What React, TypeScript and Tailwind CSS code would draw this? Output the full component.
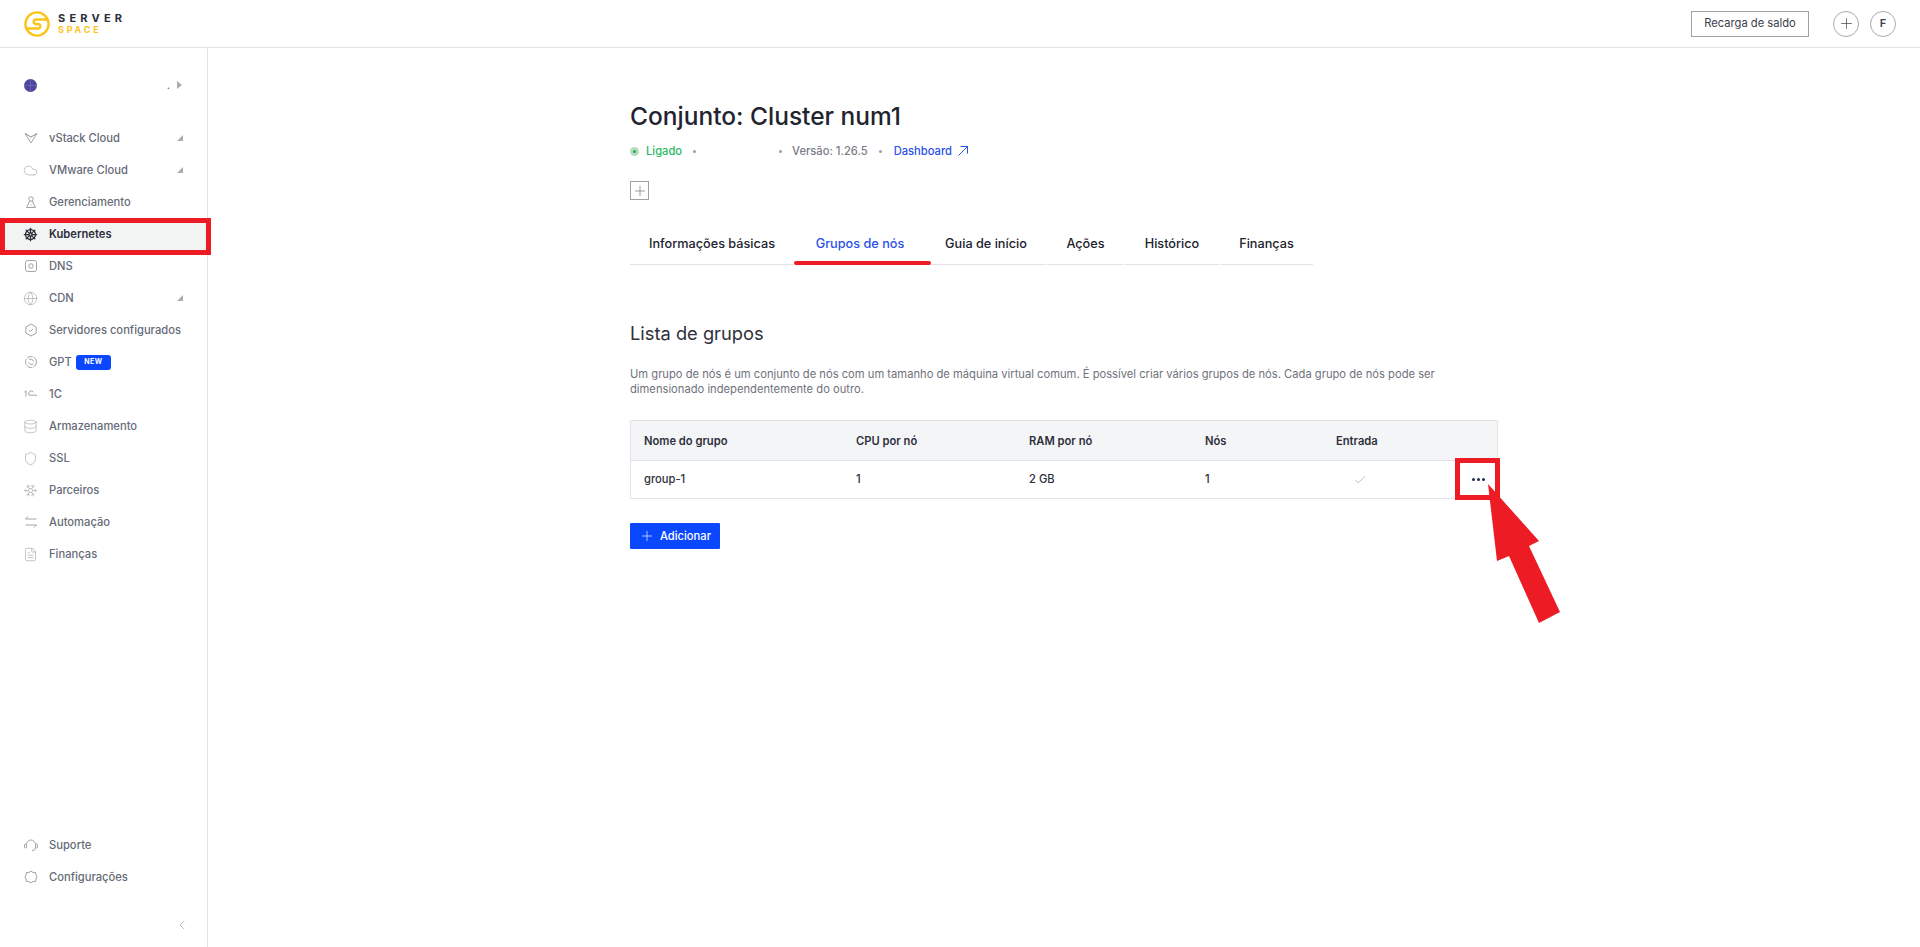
import React from "react";
import { Check, ChevronLeft, Cloud, Database, FileText, Globe, Plus, Shield, ShipWheel, Snowflake } from "lucide-react";

const iconClass = "h-[14px] w-[14px] text-[#a0a4ad]";
const lucideClass = "h-[15px] w-[15px] -ml-[1px] text-[#a0a4ad]";

function VStackIcon() {
  return (
    <svg viewBox="0 0 14 14" className={iconClass} fill="none" stroke="currentColor" strokeWidth="1">
      <path d="M1 2.500 7 12l6-9.500-6 3.500zM1 2.500 7 6M13 2.500 7 6" />
    </svg>
  );
}

function ManageIcon() {
  return (
    <svg viewBox="0 0 14 14" className={iconClass} fill="none" stroke="currentColor" strokeWidth="1">
      <circle cx="7" cy="4" r="2.200" />
      <path d="M5.800 6 2.500 12.500h9L8.200 6M7 9.500v1" />
    </svg>
  );
}

function DnsIcon() {
  return (
    <svg viewBox="0 0 14 14" className={iconClass} fill="none" stroke="currentColor" strokeWidth="1">
      <rect x="1.500" y="1.500" width="11" height="11" rx="2" />
      <circle cx="7" cy="7" r="2.200" />
    </svg>
  );
}

function ConfiguredIcon() {
  return (
    <svg viewBox="0 0 14 14" className={iconClass} fill="none" stroke="currentColor" strokeWidth="1">
      <path d="M7 1l5.200 3v6L7 13l-5.200-3V4z" />
      <path d="M4.800 7l1.600 1.500 2.800-2.800" />
    </svg>
  );
}

function GptIcon() {
  return (
    <svg viewBox="0 0 14 14" className={iconClass} fill="none" stroke="currentColor" strokeWidth="1">
      <circle cx="7" cy="7" r="5.500" strokeDasharray="6 1" />
      <path d="M5 4.500c2-1 4 0 4.500 2M9.500 9c-2 1-4 .5-5-1.500" />
    </svg>
  );
}

function OneCIcon() {
  return (
    <svg viewBox="0 0 14 14" className={iconClass} fill="none" stroke="currentColor" strokeWidth="1">
      <path d="M0.500 5l1.500-1.200V9.500" />
      <path d="M9.500 5a2.600 2.600 0 1 0-4.300 3.200H13" />
    </svg>
  );
}

function AutomationIcon() {
  return (
    <svg viewBox="0 0 14 14" className={iconClass} fill="none" stroke="currentColor" strokeWidth="1">
      <path d="M4 1.500 1.500 4h11M10 12.500 12.500 10h-11" />
    </svg>
  );
}

function SupportIcon() {
  return (
    <svg viewBox="0 0 14 14" className={iconClass} fill="none" stroke="currentColor" strokeWidth="1">
      <path d="M2.500 6.500a4.500 4.500 0 0 1 9 0v3.500a3 3 0 0 1-3.500 2.500" />
      <rect x="0.500" y="6" width="2" height="4" rx="1" />
      <rect x="11.500" y="6" width="2" height="4" rx="1" />
    </svg>
  );
}

function SettingsIcon() {
  return (
    <svg viewBox="0 0 14 14" className={iconClass} fill="none" stroke="currentColor" strokeWidth="1">
      <path d="M7 1l2 1.500h2.500L12 5l1 2-1 2-.5 2.500H9L7 13l-2-1.500H2.500L2 9 1 7l1-2 .5-2.500H5z" />
    </svg>
  );
}

function Caret() {
  return (
    <svg viewBox="0 0 6 6" className="h-[6px] w-[6px] text-[#a8abb2]" fill="currentColor">
      <polygon points="6,0 6,6 0,6" />
    </svg>
  );
}

function Logo() {
  return (
    <div className="flex items-center gap-[8px]">
      <svg viewBox="0 0 26 26" className="h-[26px] w-[26px]" fill="none" stroke="#fcc419" strokeWidth="2.400">
        <circle cx="13" cy="13" r="11.600" />
        <path d="M19 8.500h-7.500a2.300 2.300 0 0 0 0 4.500h3a2.300 2.300 0 0 1 0 4.500H2.500M12 8.500h12" />
      </svg>
      <div className="flex flex-col gap-[2px] font-bold leading-[10px]">
        <span className="text-[11px] tracking-[4.200px] text-[#2b2d3a]">SERVER</span>
        <span className="text-[9px] tracking-[2.800px] text-[#fcc419]">SPACE</span>
      </div>
    </div>
  );
}

type NavItem = {
  label: string;
  icon: React.ReactNode;
  caret?: boolean;
  active?: boolean;
  badge?: string;
};

const navItems: NavItem[] = [
  { label: "vStack Cloud", icon: <VStackIcon />, caret: true },
  { label: "VMware Cloud", icon: <Cloud className={lucideClass} strokeWidth={1} />, caret: true },
  { label: "Gerenciamento", icon: <ManageIcon /> },
  {
    label: "Kubernetes",
    icon: <ShipWheel className="h-[15px] w-[15px] -ml-[1px] text-[#2b2d3a]" strokeWidth={2} />,
    active: true,
  },
  { label: "DNS", icon: <DnsIcon /> },
  { label: "CDN", icon: <Globe className={lucideClass} strokeWidth={1} />, caret: true },
  { label: "Servidores configurados", icon: <ConfiguredIcon /> },
  { label: "GPT", icon: <GptIcon />, badge: "NEW" },
  { label: "1C", icon: <OneCIcon /> },
  { label: "Armazenamento", icon: <Database className={lucideClass} strokeWidth={1} /> },
  { label: "SSL", icon: <Shield className={lucideClass} strokeWidth={1} /> },
  { label: "Parceiros", icon: <Snowflake className={lucideClass} strokeWidth={1} /> },
  { label: "Automação", icon: <AutomationIcon /> },
  { label: "Finanças", icon: <FileText className={lucideClass} strokeWidth={1} /> },
];

const bottomItems: NavItem[] = [
  { label: "Suporte", icon: <SupportIcon /> },
  { label: "Configurações", icon: <SettingsIcon /> },
];

function NavRow({ item }: { item: NavItem }) {
  return (
    <div
      className={
        item.active
          ? "flex h-[32px] items-center bg-[#f2f3f3] pl-[24px] pr-[24px] font-semibold text-[#2b2d3a]"
          : "flex h-[32px] items-center pl-[24px] pr-[24px] font-medium text-[#666b78]"
      }
    >
      <span className="flex w-[25px] shrink-0">{item.icon}</span>
      <span className="whitespace-nowrap">{item.label}</span>
      {item.badge && (
        <span className="ml-[4px] flex h-[15px] w-[35px] items-center justify-center rounded-[3px] bg-[#0a47ff] text-[7px] font-bold tracking-[0.4px] text-white">
          {item.badge}
        </span>
      )}
      {item.caret && (
        <span className="ml-auto">
          <Caret />
        </span>
      )}
    </div>
  );
}

function Sidebar() {
  return (
    <aside className="flex w-[208px] shrink-0 flex-col border-r border-[#e2e2e4] text-[11.200px]">
      <div className="flex h-[44px] items-center pl-[24px] pr-[25px] pt-[30px]">
        <svg viewBox="0 0 13 13" className="h-[13px] w-[13px]">
          <circle cx="6.500" cy="6.500" r="6.500" fill="#4d469f" />
          <path d="M6.500 0v13M0 6.500h13" stroke="#7470b8" strokeWidth="0.600" />
        </svg>
        <span className="ml-auto text-[#666b78]">.</span>
        <svg viewBox="0 0 5 8" className="ml-[7px] h-[8px] w-[5px] text-[#a8abb2]" fill="currentColor">
          <polygon points="0,0 5,4 0,8" />
        </svg>
      </div>
      <nav className="mt-[30px] flex flex-col">
        {navItems.map((item) => (
          <NavRow key={item.label} item={item} />
        ))}
      </nav>
      <div className="mt-auto flex flex-col">
        {bottomItems.map((item) => (
          <NavRow key={item.label} item={item} />
        ))}
      </div>
      <div className="flex h-[54px] items-center justify-end pr-[17px] pt-[10px]">
        <ChevronLeft className="h-[16px] w-[16px] text-[#a0a4ad]" strokeWidth={1} />
      </div>
    </aside>
  );
}

function Dot() {
  return <span className="h-[3px] w-[3px] rounded-full bg-[#9a9da5]" />;
}

const tabs = [
  { label: "Informações básicas", width: "w-[164px]" },
  { label: "Grupos de nós", width: "w-[130px]", active: true },
  { label: "Guia de início", width: "w-[120px]" },
  { label: "Ações", width: "w-[77px]" },
  { label: "Histórico", width: "w-[94px]" },
  { label: "Finanças", width: "w-[93px]" },
];

const columns = "grid grid-cols-[212px_173px_176px_131px_1fr] items-center pl-[13px]";

export default function App() {
  return (
    <div className="relative flex h-[947px] flex-col overflow-hidden bg-white font-['Inter',sans-serif] text-[#21232e]">
      <header className="flex h-[48px] shrink-0 items-center justify-between border-b border-[#e2e2e4] pl-[24px] pr-[24px]">
        <Logo />
        <div className="flex items-center">
          <button className="flex h-[26px] w-[118px] items-center justify-center border border-[#9fa1a9] text-[11.200px] text-[#3c3f4b]">
            Recarga de saldo
          </button>
          <span className="ml-[24px] flex h-[26px] w-[26px] items-center justify-center rounded-full border border-[#a8aab1]">
            <Plus className="h-[17px] w-[17px] text-[#3c3f4b]" strokeWidth={1} />
          </span>
          <span className="ml-[11px] flex h-[26px] w-[26px] items-center justify-center rounded-full border border-[#a8aab1] text-[11px] font-semibold text-[#3c3f4b]">
            F
          </span>
        </div>
      </header>
      <div className="flex min-h-0 flex-1">
        <Sidebar />
        <main className="w-[1290px] pl-[422px]">
          <h1 className="mt-[50px] h-[36px] text-[24.500px] font-medium leading-[36px] text-[#21232e]">
            Conjunto: Cluster num1
          </h1>
          <div className="mt-[9px] flex h-[16px] items-center text-[11.200px] font-medium">
            <span className="flex h-[9px] w-[9px] items-center justify-center rounded-full bg-[#b5dcc0]">
              <span className="h-[3px] w-[3px] rounded-full bg-[#28a745]" />
            </span>
            <span className="ml-[7px] text-[#2cb766]">Ligado</span>
            <span className="ml-[11px] flex">
              <Dot />
            </span>
            <span className="ml-[83px] flex">
              <Dot />
            </span>
            <span className="ml-[10px] text-[#7a7d87]">Versão: 1.26.5</span>
            <span className="ml-[11px] flex">
              <Dot />
            </span>
            <span className="ml-[12px] text-[#2a50e8]">Dashboard</span>
            <svg viewBox="0 0 12 12" className="ml-[5px] h-[12px] w-[12px] text-[#2a50e8]" fill="none" stroke="currentColor" strokeWidth="1">
              <path d="M1.500 10.500 10.500 1.500M3.500 1.500h7v7" />
            </svg>
          </div>
          <div className="mt-[22px] flex h-[19px] w-[19px] items-center justify-center border border-[#9fa1a9]">
            <Plus className="h-[16px] w-[16px] text-[#666b78]" strokeWidth={1} />
          </div>
          <div className="mt-[24px] flex gap-[1px] text-[12.700px] font-medium">
            {tabs.map((tab) => (
              <div
                key={tab.label}
                className={
                  tab.active
                    ? `${tab.width} flex h-[41px] items-start justify-center border-b border-[#e2e2e4] pt-[10px] text-[#2a50e8]`
                    : `${tab.width} flex h-[41px] items-start justify-center border-b border-[#e2e2e4] pt-[10px] text-[#21232e]`
                }
              >
                {tab.label}
              </div>
            ))}
          </div>
          <h2 className="mt-[54px] h-[28px] text-[18.300px] leading-[28px] text-[#2e303b]">Lista de grupos</h2>
          <p className="mt-[20px] w-[830px] text-[11.200px] leading-[15px] text-[#6f727c]">
            Um grupo de nós é um conjunto de nós com um tamanho de máquina virtual comum. É possível criar vários
            grupos de nós. Cada grupo de nós pode ser dimensionado independentemente do outro.
          </p>
          <div className="mt-[23px] w-[868px] rounded-[1px] border border-[#dfe1e5] text-[11.200px]">
            <div className={`${columns} h-[40px] border-b border-[#dfe4ec] bg-[#f4f5f7] pt-[2px] font-semibold text-[#2e303b]`}>
              <span>Nome do grupo</span>
              <span>CPU por nó</span>
              <span>RAM por nó</span>
              <span>Nós</span>
              <span>Entrada</span>
            </div>
            <div className={`${columns} h-[37px] font-medium text-[#2e303b]`}>
              <span>group-1</span>
              <span>1</span>
              <span>2 GB</span>
              <span>1</span>
              <span className="flex items-center justify-between pr-[12px]">
                <Check className="ml-[17px] h-[14px] w-[14px] text-[#a0a3b2]" strokeWidth={1.200} />
                <span className="flex gap-[2px]">
                  <span className="h-[3px] w-[3px] rounded-full bg-[#1f2a4d]" />
                  <span className="h-[3px] w-[3px] rounded-full bg-[#1f2a4d]" />
                  <span className="h-[3px] w-[3px] rounded-full bg-[#1f2a4d]" />
                </span>
              </span>
            </div>
          </div>
          <button className="mt-[24px] flex h-[26px] w-[90px] items-center justify-center gap-[5px] rounded-[1px] bg-[#0a47ff] text-[11.200px] font-medium text-white">
            <Plus className="h-[16px] w-[16px]" strokeWidth={1} />
            Adicionar
          </button>
        </main>
      </div>

      {/* annotations drawn over the page */}
      <div className="absolute left-0 top-[218px] h-[37px] w-[211px] border-[5px] border-[#ed1c24]" />
      <div className="absolute left-[794px] top-[261px] h-[4px] w-[137px] rounded-full bg-[#ed1c24]" />
      <div className="absolute left-[1455px] top-[458px] h-[42px] w-[45px] border-[5px] border-[#ed1c24]" />
      <svg viewBox="0 0 80 145" className="absolute left-[1484px] top-[481px] h-[145px] w-[80px]">
        <polygon points="4,3 55,60 45,65 76,131 55,142 25,75 13,80" fill="#ed1c24" />
      </svg>
    </div>
  );
}
